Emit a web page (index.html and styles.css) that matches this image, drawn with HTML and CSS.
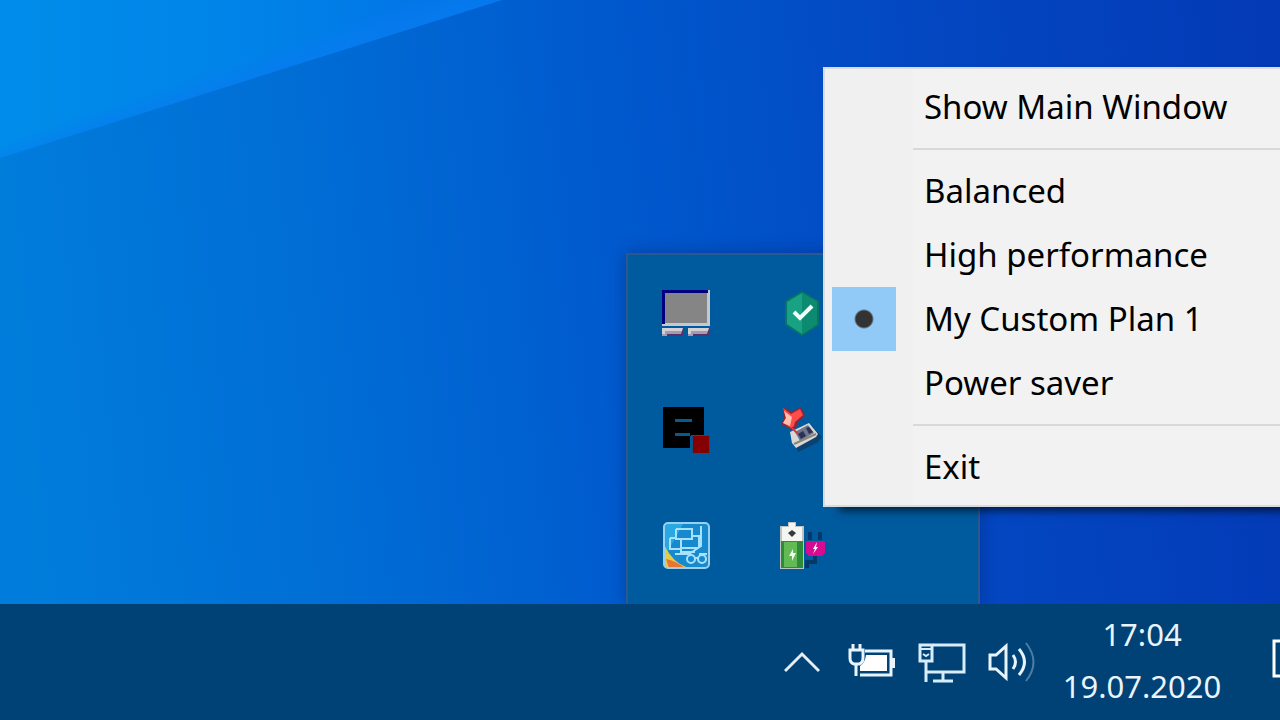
FILE: index.html
```html
<!DOCTYPE html>
<html lang="en">
<head>
<meta charset="utf-8">
<meta name="viewport" content="width=device-width, initial-scale=1">
<title>Desktop</title>
<link rel="stylesheet" href="styles.css">
</head>
<body>
<div class="screen">
  <main class="desktop">
    <svg class="wallpaper" viewBox="0 0 1280 604" preserveAspectRatio="none" aria-hidden="true">
      <defs>
        <linearGradient id="base" gradientUnits="userSpaceOnUse" x1="0" y1="300" x2="1280" y2="180">
          <stop offset="0" stop-color="#007ddc"/><stop offset=".25" stop-color="#006dd5"/><stop offset=".5" stop-color="#0058cd"/><stop offset=".72" stop-color="#0348c2"/><stop offset="1" stop-color="#043ab6"/>
        </linearGradient>
        <linearGradient id="beam" gradientUnits="userSpaceOnUse" x1="0" y1="0" x2="500" y2="0">
          <stop offset="0" stop-color="#008dea"/><stop offset=".5" stop-color="#0083e8"/><stop offset="1" stop-color="#0270e6"/>
        </linearGradient>
        <linearGradient id="edge" gradientUnits="userSpaceOnUse" x1="222" y1="65" x2="229" y2="85">
          <stop offset="0" stop-color="#087bf0" stop-opacity="0"/><stop offset="1" stop-color="#087bf0" stop-opacity=".7"/>
        </linearGradient>
      </defs>
      <rect width="1280" height="604" fill="url(#base)"/>
      <path d="M0 0H502L0 158Z" fill="url(#beam)"/>
      <path d="M0 0H502L0 158Z" fill="url(#edge)"/>
    </svg>

    <section class="flyout" aria-label="Hidden icons">
      <button class="cell" aria-label="Touchpad">
        <svg width="48" height="48" viewBox="0 0 48 48">
          <path d="M0 0H48V36H0Z" fill="#c6c8cf"/><path d="M0 0H46V3H3V34H0Z" fill="#000080"/><path d="M3 3H45V33H3Z" fill="#858585"/>
          <path d="M0 38H21V46H0ZM26 38H47V46H26Z" fill="#a19caf"/><path d="M0 38H21V41H3V44H0ZM26 38H47V41H29V44H26Z" fill="#d4d0d5"/><path d="M5 44H19L21 38V46H5ZM31 44H45L47 38V46H31Z" fill="#56316e"/>
        </svg>
      </button>
      <button class="cell" aria-label="Security">
        <svg width="48" height="48" viewBox="0 0 48 48">
          <path d="M24 1L41 11V35L24 46L7 35V11Z" fill="#087465"/><path d="M24 3L39 12V34L24 44L9 34V12Z" fill="#18a283"/><path d="M24 3L39 12V34L24 44Z" fill="#0d8b70"/>
          <path d="M16 22L22 28L34 16" fill="none" stroke="#effffa" stroke-width="4"/>
        </svg>
      </button>
      <button class="cell" aria-label="Editor">
        <svg width="48" height="48" viewBox="0 0 48 48">
          <path d="M1 1H42V30H28V42H1Z" fill="#000"/><path d="M13 13H30V16H13ZM13 27H28V30H13Z" fill="#075b95"/><path d="M29 29H48V47H29Z" fill="#164e83"/><path d="M31 30H47V47H31Z" fill="#850000"/>
        </svg>
      </button>
      <button class="cell" aria-label="Safely remove">
        <svg width="48" height="48" viewBox="0 0 48 48">
          <path d="M15 28L34 20L44 31L39 37L20 46Z" fill="#123a61" opacity=".75"/>
          <path d="M12 26L31 17L40 28L38 31L18 42L14 37Z" fill="#d9d8d2"/><path d="M17 26L30 19L36 27L22 35Z" fill="#71748d"/><path d="M20 28L25 25L28 30L23 33ZM28 22L31 21L35 26L31 28Z" fill="#293454"/><path d="M16 38L38 28" stroke="#89877d" stroke-width="2"/>
          <path d="M5 0L13 6L23 1L27 10L20 16L18 22L14 24L3 18L6 12Z" fill="#8e2634"/><path d="M5 2L13 8L22 3L25 9L17 16L16 20L13 22L5 17L8 12Z" fill="#ff4b49"/><path d="M6 5L14 11L12 20L5 17L8 12Z" fill="#ffc0ad"/><path d="M14 22L20 28" stroke="#ed3038" stroke-width="2"/>
        </svg>
      </button>
      <button class="cell" aria-label="Graphics settings">
        <svg width="48" height="48" viewBox="0 0 48 48">
          <rect x="2" y="1" width="45" height="45" rx="4" fill="#1689cf"/><path d="M3 24Q10 40 26 46H6Q3 46 3 42Z" fill="#e2cb47"/><path d="M4 37Q14 39 23 46H7Z" fill="#e87436"/>
          <path d="M3 2H21L6 29Q3 27 3 20Z" fill="#35b9ec" opacity=".65"/>
          <g fill="none" stroke="#a6e2fb" stroke-width="2"><path d="M14 7H30V14H37V26M14 7V17H30V12M8 16V27H19V30H33M8 16H14M19 17V26H37M13 32H27L39 24V4M37 32H45"/><circle cx="29" cy="37" r="4"/><circle cx="40" cy="37" r="4"/><path d="M33 36H36"/></g>
          <rect x="2" y="1" width="45" height="45" rx="4" fill="none" stroke="#98d1f0" stroke-width="2"/>
        </svg>
      </button>
      <button class="cell" aria-label="Power plan">
        <svg width="48" height="48" viewBox="0 0 48 48">
          <path d="M10 0H18V4H26V47H2V4H10Z" fill="#bfc2c0"/><path d="M11 1H17V5H24V19H4V5H11Z" fill="#f5f5f1"/><path d="M3 19H25V46H3Z" fill="#2e8b39"/><path d="M6 20H19V45H6Z" fill="#62ba55"/><path d="M14 8L18 11L14 15L10 11Z" fill="#343a3c"/><path d="M15 27L11 34H14V39L18 31H15Z" fill="#f1fff0"/>
          <path d="M32 10V18M42 10V18M37 32V40H29V46" fill="none" stroke="#073967" stroke-width="4"/><path d="M28 19H47V31L44 34H31L28 31Z" fill="#d60b91"/><path d="M39 20L35 27H37L35 32L40 25H38Z" fill="#fff"/>
        </svg>
      </button>
    </section>

    <form class="menu" aria-label="Power plan menu">
      <button type="button" class="item action">Show Main Window</button>
      <hr class="rule">
      <label class="item"><input class="mark" type="radio" name="plan">Balanced</label>
      <label class="item"><input class="mark" type="radio" name="plan">High performance</label>
      <label class="item"><input class="mark" type="radio" name="plan" checked>My Custom Plan 1</label>
      <label class="item"><input class="mark" type="radio" name="plan">Power saver</label>
      <hr class="rule">
      <button type="button" class="item action">Exit</button>
    </form>
  </main>

  <footer class="taskbar">
    <button class="tray" aria-label="Show hidden icons">
      <svg width="36" height="48" viewBox="0 0 36 48"><path d="M1 33L18 16L35 33" fill="none" stroke="#e6eef5" stroke-width="3"/></svg>
    </button>
    <button class="tray" aria-label="Battery, charging">
      <svg width="48" height="48" viewBox="0 0 48 48">
        <g fill="none" stroke="#e8f3fb" stroke-width="3"><path d="M17 13H43V37H12M5 6V12M12 6V12M8 26V38"/><path d="M2 12H15V20Q15 25 11 26H6Q2 25 2 20Z"/></g><path d="M18 17H39V33H12V28Q17 25 18 17Z" fill="#fff"/><path d="M43 20H47V30H43Z" fill="#e8f3fb"/>
      </svg>
    </button>
    <button class="tray" aria-label="Network">
      <svg width="48" height="48" viewBox="0 0 48 48">
        <g fill="none" stroke="#d8edfb" stroke-width="3"><path d="M15 7H46V34H8M8 23V44M25 34V42M15 43H35"/><path d="M2 7H14V23H2Z"/></g><path d="M3 11H13M5 16L8 18L11 16" fill="none" stroke="#d8edfb" stroke-width="2"/>
      </svg>
    </button>
    <button class="tray" aria-label="Volume">
      <svg width="48" height="48" viewBox="0 0 48 48">
        <g fill="none" stroke="#e8f3fb" stroke-width="3"><path d="M2 17H8L18 8V40L8 31H2Z"/><path d="M25 17Q30 24 25 31M31 11Q42 24 31 37"/><path d="M38 5Q53 24 38 43" stroke="#4d7da5" stroke-width="2"/></g>
      </svg>
    </button>
    <button class="clock"><time datetime="2020-07-19T17:04">17:04<br>19.07.2020</time></button>
    <button class="notifications" aria-label="Notifications">
      <svg width="48" height="48" viewBox="0 0 48 48"><path d="M2 3H46V38H34L26 46V38H2Z" fill="none" stroke="#fff" stroke-width="3"/></svg>
    </button>
  </footer>
</div>
</body>
</html>
```
FILE: styles.css
```css
* { box-sizing: border-box; }

body {
  margin: 0;
  font-family: "Noto Sans", sans-serif;
}

button {
  padding: 0;
  border: 0;
  background: none;
  color: inherit;
  font: inherit;
}

svg { display: block; flex: none; }

.screen {
  display: flex;
  flex-direction: column;
  height: 100vh;
  overflow: hidden;
}

.desktop {
  position: relative;
  flex: 1;
  min-height: 0;
}

.wallpaper { width: 100%; height: 100%; }

.flyout {
  position: absolute;
  left: 626px;
  bottom: 0;
  display: grid;
  grid-template-columns: repeat(3, 116px);
  grid-auto-rows: 116px;
  padding: 1px 2px 0 0;
  border: 2px solid #2a5990;
  border-bottom: 0;
  background: #005a9e;
  box-shadow: 0 0 16px rgba(0, 20, 80, 0.35);
}

.cell {
  display: grid;
  place-items: center;
}

/* The third column is empty in every row. */
.cell:nth-child(odd) { grid-column: 1; }
.cell:nth-child(even) { grid-column: 2; }

.menu {
  position: absolute;
  z-index: 1;
  top: 67px;
  left: 823px;
  width: 560px;
  padding: 6px 0;
  border: 2px solid #d9dbdf;
  background: linear-gradient(90deg, #f0f0f0 88px, #f2f2f2 88px);
  box-shadow: 14px 6px 8px -2px rgba(0, 0, 0, 0.6);
  color: #000;
  font-size: 33px;
  line-height: 64px;
}

.item {
  display: flex;
  gap: 28px;
  height: 64px;
  padding-left: 7px;
  white-space: nowrap;
}

.action { padding-left: 99px; }

.mark {
  flex: none;
  width: 64px;
  height: 64px;
  margin: 0;
  appearance: none;
}

.mark:checked {
  background: radial-gradient(circle, #333 8px, #91c9f7 10px);
}

.rule {
  height: 2px;
  margin: 9px 0 9px 88px;
  border: 0;
  background: #d9d9d9;
}

.taskbar {
  position: relative;
  z-index: 2;
  display: flex;
  justify-content: flex-end;
  align-items: center;
  gap: 22px;
  height: 116px;
  background: #004275;
  color: #e9f4fc;
}

.tray:first-child { margin-right: 6px; }

.clock {
  width: 168px;
  margin-right: 24px;
  padding-bottom: 4px;
  font-size: 31px;
  line-height: 52px;
  text-align: center;
}

.notifications {
  margin: 0 -40px 0 0;
}
```
